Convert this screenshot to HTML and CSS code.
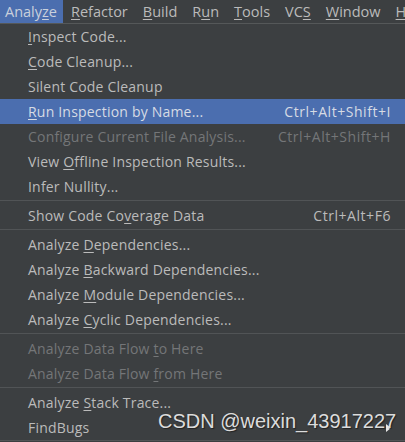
FILE: index.html
```html
<!DOCTYPE html>
<html>
<head>
<meta charset="utf-8">
<link rel="stylesheet" href="styles.css">
</head>
<body>
<div class="screen">
  <div class="menubar">
    <span class="mb-item active">Analy<u>z</u>e</span>
    <span class="mb-item"><u>R</u>efactor</span>
    <span class="mb-item"><u>B</u>uild</span>
    <span class="mb-item">R<u>u</u>n</span>
    <span class="mb-item"><u>T</u>ools</span>
    <span class="mb-item">VC<u>S</u></span>
    <span class="mb-item"><u>W</u>indow</span>
    <span class="mb-item"><u>H</u>elp</span>
  </div>
  <div class="menu">
    <div class="item"><span class="label"><u>I</u>nspect Code...</span></div>
    <div class="item"><span class="label"><u>C</u>ode Cleanup...</span></div>
    <div class="item"><span class="label">Silent Code Cleanup</span></div>
    <div class="item selected"><span class="label"><u>R</u>un Inspection by Name...</span><span class="key">Ctrl+Alt+Shift+I</span></div>
    <div class="item disabled"><span class="label">Configure Current File Analysis...</span><span class="key">Ctrl+Alt+Shift+H</span></div>
    <div class="item"><span class="label">View <u>O</u>ffline Inspection Results...</span></div>
    <div class="item"><span class="label">Infer Nullity...</span></div>
    <div class="sep"></div>
    <div class="item"><span class="label">Show Code Co<u>v</u>erage Data</span><span class="key">Ctrl+Alt+F6</span></div>
    <div class="sep"></div>
    <div class="item"><span class="label">Analyze <u>D</u>ependencies...</span></div>
    <div class="item"><span class="label">Analyze <u>B</u>ackward Dependencies...</span></div>
    <div class="item"><span class="label">Analyze <u>M</u>odule Dependencies...</span></div>
    <div class="item"><span class="label">Analyze <u>C</u>yclic Dependencies...</span></div>
    <div class="sep"></div>
    <div class="item disabled"><span class="label">Analyze Data Flow <u>t</u>o Here</span></div>
    <div class="item disabled"><span class="label">Analyze Data Flow <u>f</u>rom Here</span></div>
    <div class="sep"></div>
    <div class="item"><span class="label">Analyze <u>S</u>tack Trace...</span></div>
    <div class="item submenu"><span class="label">FindBugs</span><span class="arrow"></span></div>
    <div class="bottom-line"></div>
  </div>
  <div class="watermark">CSDN @weixin_43917227</div>
</div>
</body>
</html>
```

FILE: styles.css
```css
html, body {
  margin: 0;
  padding: 0;
  background: #3c3f41;
}
.screen {
  position: relative;
  width: 405px;
  height: 442px;
  overflow: hidden;
  background: #3c3f41;
  font-family: "Open Sans", "Noto Sans", sans-serif;
  font-size: 14px;
  color: #bbbbbb;
}
u {
  text-decoration: underline;
  text-underline-offset: 2px;
  text-decoration-thickness: 1px;
}
.menubar {
  display: flex;
  height: 23px;
  align-items: stretch;
  white-space: nowrap;
  border-bottom: 1px solid #555859;
  font-size: 14.5px;
}
.mb-item {
  display: flex;
  align-items: center;
  padding: 0 7px 0 8px;
}
.mb-item:first-child {
  padding: 0 6px 0 5px;
}
.mb-item.active {
  background: #4b6eaf;
  color: #c9d0dc;
}
.menu {
  display: flex;
  flex-direction: column;
}
.item {
  position: relative;
  display: flex;
  align-items: center;
  justify-content: space-between;
  height: 25px;
  padding: 0 14px 0 28px;
  white-space: nowrap;
  letter-spacing: 0.2px;
}
.key {
  letter-spacing: 0.55px;
}
.item.selected {
  background: #4b6eaf;
  color: #d6dbe4;
}
.item.disabled {
  color: #747678;
}
.sep {
  height: 1px;
  margin: 1px 0 2px;
  background: #515456;
}
.bottom-line {
  height: 1px;
  background: #515456;
}
.arrow {
  width: 0;
  height: 0;
  border-top: 4px solid transparent;
  border-bottom: 4px solid transparent;
  border-left: 5px solid #e8e8e8;
}
.watermark {
  position: absolute;
  left: 158px;
  top: 410px;
  font-family: "Liberation Sans", Arial, sans-serif;
  font-size: 20px;
  color: #dcdcdc;
  text-shadow: 1px 1px 1px #222;
  white-space: nowrap;
}
```
